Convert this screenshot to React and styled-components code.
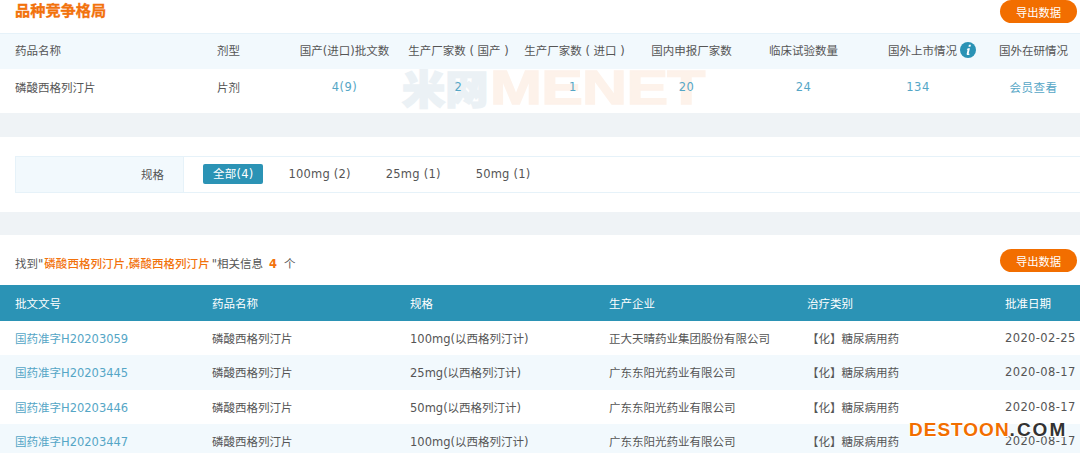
import React from "react";
import styled, { createGlobalStyle } from "styled-components";

const Global = createGlobalStyle`
  html, body { margin: 0; padding: 0; background: #fff; }
  body { font-family: "DejaVu Sans", "Noto Sans CJK SC", sans-serif; font-size: 11.5px; color: #555; overflow: hidden; }
`;
const Page = styled.div`width: 1080px; height: 453px; overflow: hidden; position: relative;`;
const TitleBar = styled.div`height: 33px; display: flex; justify-content: space-between; align-items: flex-start; padding: 0 3px 0 15px;`;
const Title = styled.h2`margin: 0; padding-top: 1px; font-size: 15.2px; line-height: 20px; font-weight: 700; color: #f2720c; -webkit-text-stroke: 0.3px #f2720c;`;
const ExportBtn = styled.button`
  width: 77px; height: 23px; border: 0; border-radius: 12px; background: #f26e00; color: #fff;
  font: inherit; font-size: 11.3px; padding: 0; margin-top: ${p => p.$top || 0}px;
`;
const Overview = styled.section`position: relative;`;
const OverRow = styled.div`
  display: grid; grid-template-columns: 217px 70px 115px 115px 116px 117px 107px 150px 53px 20px;
  align-items: center; height: ${p => p.$h}px; padding-bottom: ${p => p.$pb}px;
  background: ${p => p.$head ? "#f2f9fd" : "transparent"};
  border-top: ${p => p.$head ? "1px solid #e6f2f9" : "0"};
  box-sizing: border-box; position: relative; z-index: 1;
`;
const OCell = styled.div`
  white-space: nowrap;
  padding-left: ${p => p.$pad || 0}px; padding-right: ${p => p.$shift || 0}px;
  color: ${p => p.$link ? "#55a6c6" : "#555"};
  letter-spacing: ${p => p.$link ? "0.5px" : "0"};
  display: flex; justify-content: ${p => p.$left ? "flex-start" : "center"}; align-items: center; gap: 3px;
`;
const InfoIcon = styled.svg`width: 16px; height: 16px; flex: none;`;
const Watermark = styled.div`
  position: absolute; left: 402px; top: 36px; height: 36px; display: flex; align-items: center; white-space: nowrap;
  line-height: 36px;
`;
const WmCn = styled.span`
  display: inline-block; width: 88px; transform: scaleX(1.08); transform-origin: left center;
  font-family: "Noto Sans CJK SC", sans-serif; font-weight: 900; font-size: 40px; letter-spacing: 0; color: #ebf1f5;
  -webkit-text-stroke: 1.5px #ebf1f5;
`;
const WmEn = styled.span`
  display: inline-block; transform: scaleX(1.27); transform-origin: left center;
  font-family: "Liberation Sans", sans-serif; font-weight: 700; font-size: 49px; color: #fdf2ea; letter-spacing: -0.5px;
  -webkit-text-stroke: 1.5px #fdf2ea;
`;
const Gap = styled.div`height: ${p => p.$h}px; background: #eff3f6;`;
const FilterWrap = styled.div`height: 75px; padding: 19px 0 0 15px; box-sizing: border-box;`;
const Filter = styled.div`
  display: flex; height: 37px; box-sizing: border-box; border: 1px solid #e6f2f9; border-right: 0; align-items: stretch;
`;
const FilterLabel = styled.div`
  width: 168px; box-sizing: border-box; background: #f2f9fd; border-right: 1px solid #e6f2f9; padding-bottom: 2px;
  display: flex; align-items: center; justify-content: flex-end; padding-right: 19px;
`;
const FilterItems = styled.div`display: flex; align-items: center; gap: 15px; padding: 0 0 1px 19px;`;
const Pill = styled.span`
  height: 20px; line-height: 20px; border-radius: 2px; white-space: nowrap; padding: 0 10px; letter-spacing: 0.22px;
  background: ${p => p.$active ? "#2b93b5" : "transparent"}; color: ${p => p.$active ? "#fff" : "#555"};
`;
const FoundBar = styled.div`
  height: 50px; display: flex; justify-content: space-between; align-items: flex-start; padding: 0 3px 0 15px; box-sizing: border-box;
`;
const Found = styled.div`padding-top: 21px; line-height: 17px; white-space: nowrap;`;
const Hi = styled.span`color: #f2720c; font-weight: 500; margin: 0 2px 0 1px; letter-spacing: 0.05px;`;
const Count = styled.span`color: #f2720c; font-weight: 700; margin: 0 7px 0 6px;`;
const Row = styled.div`
  display: grid; grid-template-columns: 197px 198px 199px 198px 198px 1fr; padding-left: 15px; align-items: center;
  height: ${p => p.$h}px; box-sizing: border-box; padding-bottom: ${p => p.$head ? 0 : 1}px;
  background: ${p => p.$head ? "#2b93b5" : p.$alt ? "#f2f9fd" : "#fff"};
  color: ${p => p.$head ? "#fff" : "#555"};
`;
const Cell = styled.div`
  white-space: nowrap; color: ${p => p.$link ? "#55a6c6" : "inherit"};
  letter-spacing: ${p => p.$date ? "0.38px" : "0"};
`;
const Stamp = styled.div`
  position: absolute; left: 909px; top: 418px; font-family: "Liberation Sans", sans-serif; font-weight: 700; font-size: 19px; line-height: 24px;
  letter-spacing: 1px; color: #f26e00; white-space: nowrap; -webkit-text-stroke: 0.6px currentColor; paint-order: stroke fill;
  text-shadow: 1px 1px 0 #fff, -1px -1px 0 #fff, 1px -1px 0 #fff, -1px 1px 0 #fff;
`;
const Dark = styled.span`color: #333; letter-spacing: 2px;`;

const rows = [
  ["国药准字H20203059", "100mg(以西格列汀计)", "正大天晴药业集团股份有限公司", "2020-02-25", 34],
  ["国药准字H20203445", "25mg(以西格列汀计)", "广东东阳光药业有限公司", "2020-08-17", 35],
  ["国药准字H20203446", "50mg(以西格列汀计)", "广东东阳光药业有限公司", "2020-08-17", 34],
  ["国药准字H20203447", "100mg(以西格列汀计)", "广东东阳光药业有限公司", "2020-08-17", 35],
];

export default function App() {
  return (
    <Page>
      <Global />
      <TitleBar>
        <Title>品种竞争格局</Title>
        <ExportBtn>导出数据</ExportBtn>
      </TitleBar>
      <Overview>
        <Watermark>
          <WmCn>米网</WmCn>
          <WmEn>MENET</WmEn>
        </Watermark>
        <OverRow $head $h={36} $pb={3}>
          <OCell $left $pad={15}>药品名称</OCell>
          <OCell $left>剂型</OCell>
          <OCell>国产(进口)批文数</OCell>
          <OCell $shift={2}>生产厂家数 ( 国产 )</OCell>
          <OCell $shift={1}>生产厂家数 ( 进口 )</OCell>
          <OCell>国内申报厂家数</OCell>
          <OCell>临床试验数量</OCell>
          <OCell>
            国外上市情况
            <InfoIcon viewBox="0 0 16 16">
              <circle cx="8" cy="8" r="8" fill="#2b93b5" />
              <path d="M8.9 2.8h2l-.4 2h-2zM7.9 6.2h2l-1.2 5.2c-.1.5.3.6.9.3l-.2 1c-1.5.7-3 .5-2.7-1l.8-3.6c.1-.5-.2-.7-.8-.7z" fill="#fff" />
            </InfoIcon>
          </OCell>
          <OCell>国外在研情况</OCell>
        </OverRow>
        <OverRow $h={44} $pb={8}>
          <OCell $left $pad={15}>磷酸西格列汀片</OCell>
          <OCell $left>片剂</OCell>
          <OCell $link>4(9)</OCell>
          <OCell $link $shift={2}>2</OCell>
          <OCell $link $shift={4}>1</OCell>
          <OCell $link $shift={10}>20</OCell>
          <OCell $link>24</OCell>
          <OCell $link $shift={28}>134</OCell>
          <OCell $link>会员查看</OCell>
        </OverRow>
      </Overview>
      <Gap $h={24} />
      <FilterWrap>
        <Filter>
          <FilterLabel>规格</FilterLabel>
          <FilterItems>
            <Pill $active>全部(4)</Pill>
            <Pill>100mg (2)</Pill>
            <Pill>25mg (1)</Pill>
            <Pill>50mg (1)</Pill>
          </FilterItems>
        </Filter>
      </FilterWrap>
      <Gap $h={23} />
      <FoundBar>
        <Found>找到"<Hi>磷酸西格列汀片,磷酸西格列汀片</Hi>"相关信息<Count>4</Count>个</Found>
        <ExportBtn $top={14}>导出数据</ExportBtn>
      </FoundBar>
      <Row $head $h={36}>
        <Cell>批文文号</Cell><Cell>药品名称</Cell><Cell>规格</Cell><Cell>生产企业</Cell><Cell>治疗类别</Cell><Cell>批准日期</Cell>
      </Row>
      {rows.map((r, i) => (
        <Row key={r[0]} $alt={i % 2 === 1} $h={r[4]}>
          <Cell $link>{r[0]}</Cell>
          <Cell>磷酸西格列汀片</Cell>
          <Cell>{r[1]}</Cell>
          <Cell>{r[2]}</Cell>
          <Cell>【化】糖尿病用药</Cell>
          <Cell $date>{r[3]}</Cell>
        </Row>
      ))}
      <Stamp>DESTOON<Dark>.COM</Dark></Stamp>
    </Page>
  );
}
